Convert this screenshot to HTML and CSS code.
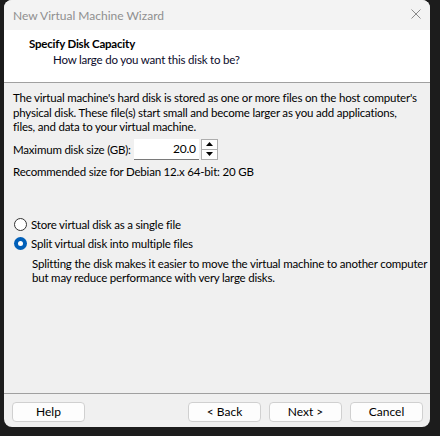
FILE: index.html
```html
<!DOCTYPE html>
<html>
<head>
<meta charset="utf-8">
<link rel="stylesheet" href="styles.css">
</head>
<body>
<div class="window">
  <div class="titlebar">
    <span class="title">New Virtual Machine Wizard</span>
    <svg class="close" width="10" height="10" viewBox="0 0 10 10"><path d="M0.5 0.5 L9.5 9.5 M9.5 0.5 L0.5 9.5" stroke="#8a8a8a" stroke-width="1" fill="none"/></svg>
  </div>
  <div class="header">
    <div class="h-title">Specify Disk Capacity</div>
    <div class="h-sub">How large do you want this disk to be?</div>
  </div>
  <div class="content">
    <p class="desc">The virtual machine's hard disk is stored as one or more files on the host computer's<br>physical disk. These file(s) start small and become larger as you add applications,<br>files, and data to your virtual machine.</p>
    <div class="size-row">
      <span class="label">Maximum disk size (GB):</span>
      <div class="spin">
        <div class="spin-input">20.0</div>
        <div class="spin-btns">
          <div class="spin-btn"><svg width="7" height="4" viewBox="0 0 7 4"><path d="M3.5 0 L7 4 L0 4 Z" fill="#000"/></svg></div>
          <div class="spin-btn"><svg width="7" height="4" viewBox="0 0 7 4"><path d="M0 0 L7 0 L3.5 4 Z" fill="#000"/></svg></div>
        </div>
      </div>
    </div>
    <p class="rec">Recommended size for Debian 12.x 64-bit: 20 GB</p>
    <div class="options">
      <label class="radio-row"><span class="radio"></span>Store virtual disk as a single file</label>
      <label class="radio-row"><span class="radio checked"></span>Split virtual disk into multiple files</label>
      <p class="note">Splitting the disk makes it easier to move the virtual machine to another computer<br>but may reduce performance with very large disks.</p>
    </div>
  </div>
  <div class="footer">
    <button class="btn">Help</button>
    <div class="spacer"></div>
    <button class="btn">&lt; Back</button>
    <button class="btn">Next &gt;</button>
    <button class="btn">Cancel</button>
  </div>
</div>
</body>
</html>
```
FILE: styles.css
```css
* { box-sizing: border-box; }
html, body { margin: 0; padding: 0; }
body {
  background: #1c1c1c;
  width: 440px;
  height: 436px;
  overflow: hidden;
  font-family: "Lato", "Open Sans", sans-serif;
  font-size: 11.5px;
  letter-spacing: -0.2px;
  color: #000;
}
.window {
  margin-left: 4px;
  width: 426px;
  height: 427px;
  background: #f0f0f0;
  border-radius: 8px;
  overflow: hidden;
  display: flex;
  flex-direction: column;
}
.titlebar {
  height: 30px;
  background: #f3f3f3;
  display: flex;
  align-items: center;
  padding-left: 9px;
  padding-right: 9px;
  justify-content: space-between;
}
.title { color: #8f8f8f; font-size: 12px; letter-spacing: 0; }
.close { display: block; margin-top: -2px; }
.header {
  height: 53px;
  background: #fff;
  border-bottom: 1px solid #a0a0a0;
  padding: 6px 0 0 25px;
}
.h-title { font-weight: bold; line-height: 16px; }
.h-sub { padding-left: 24px; line-height: 16px; color: #0a0a2a; }
.content {
  flex: 1;
  padding: 8px 4px 0 9px;
  white-space: nowrap;
}
p { margin: 0; }
.desc { line-height: 14.5px; }
.size-row {
  display: flex;
  align-items: center;
  margin-top: 4px;
}
.label { flex: none; margin-right: 3px; }
.spin { display: flex; align-items: center; gap: 2px; }
.spin-input {
  width: 65px;
  height: 21px;
  background: #fff;
  border-bottom: 1px solid #7a7a7a;
  text-align: right;
  padding-right: 3px;
  line-height: 20px;
  font-size: 12px;
}
.spin-btns {
  display: flex;
  flex-direction: column;
  border: 1px solid #adadad;
  width: 17px;
  height: 21px;
}
.spin-btn {
  flex: 1;
  background: #fdfdfd;
  display: flex;
  align-items: center;
  justify-content: center;
}
.spin-btn + .spin-btn { border-top: 1px solid #adadad; }
.spin-btn svg { display: block; }
.rec { margin-top: 4.5px; line-height: 16px; }
.options { margin-top: 34.5px; }
.radio-row {
  display: flex;
  align-items: center;
  height: 19px;
}
.radio {
  width: 13px;
  height: 13px;
  border: 1px solid #333;
  border-radius: 50%;
  background: #fff;
  margin-left: 1px;
  margin-right: 4px;
  position: relative;
}
.radio.checked {
  border: none;
  background: #005fb8;
}
.radio.checked::after {
  content: "";
  position: absolute;
  left: 4px; top: 4px;
  width: 5px; height: 5px;
  border-radius: 50%;
  background: #fff;
}
.note { padding-left: 19px; margin-top: 4.5px; line-height: 14px; }
.footer {
  height: 34px;
  border-top: 1px solid #a0a0a0;
  display: flex;
  align-items: flex-start;
  padding: 8px 7px 0 8px;
  margin-bottom: 0;
}
.spacer { flex: 1; }
.btn {
  width: 73px;
  height: 20px;
  background: #fdfdfd;
  border: 1px solid #d0d0d0;
  border-radius: 4px;
  font: inherit;
  font-size: 12px;
  letter-spacing: 0;
  color: #000;
  padding: 0;
  line-height: 18px;
}
.btn + .btn { margin-left: 8px; }
.spacer + .btn { margin-left: 0; }
```
